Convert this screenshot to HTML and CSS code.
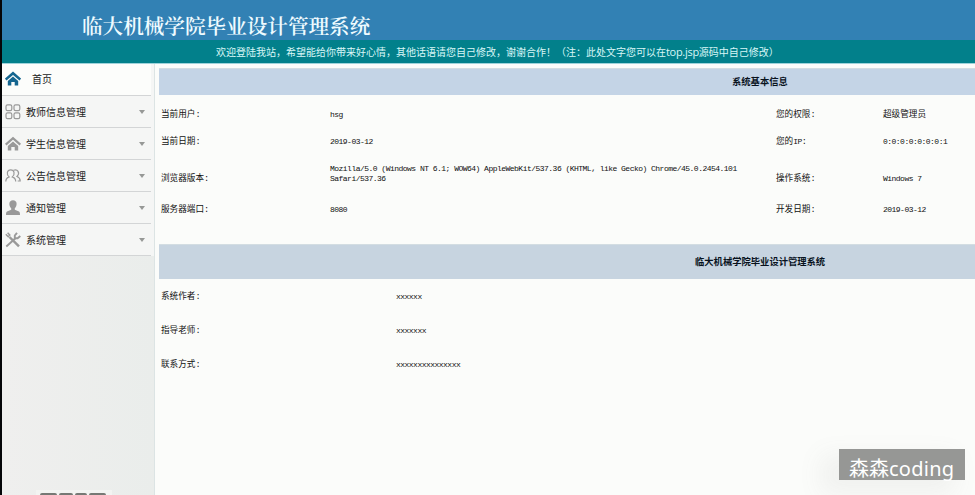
FILE: index.html
```
<!DOCTYPE html>
<html lang="zh-CN">
<head>
<meta charset="utf-8">
<title>临大机械学院毕业设计管理系统</title>
<link rel="stylesheet" href="styles.css">
</head>
<body>
<header class="header">
  <h1 class="title">临大机械学院毕业设计管理系统</h1>
  <div class="notice">欢迎登陆我站，希望能给你带来好心情，其他话语请您自己修改，谢谢合作！（注：此处文字您可以在<span class="latin">top.jsp</span>源码中自己修改）</div>
</header>
<div class="layout">
  <nav class="sidebar">
    <a class="item home"><svg class="icon" viewBox="0 0 16 16"><path d="M.7 8.600 8 2.200l7.300 6.400" fill="none" stroke="#14658f" stroke-width="2.500"/><path d="M2.800 9.900 8 5.400l5.200 4.500V14.500H9.700V11H6.300v3.500H2.800z" fill="#14658f"/></svg><span class="label">首页</span></a>
    <a class="item"><svg class="icon" viewBox="0 0 16 16"><g fill="none" stroke="#999" stroke-width="1.200"><rect x="1" y=".8" width="5.800" height="5.800" rx="1.600"/><rect x="9" y=".8" width="5.800" height="5.800" rx="1.600"/><rect x="1" y="8.800" width="5.800" height="5.800" rx="1.600"/><rect x="9" y="8.800" width="5.800" height="5.800" rx="1.600"/></g></svg><span class="label">教师信息管理</span><i class="arrow"></i></a>
    <a class="item"><svg class="icon" viewBox="0 0 16 16"><path d="M.7 8.600 8 2.200l7.300 6.400" fill="none" stroke="#999" stroke-width="2.300"/><path d="M2.800 9.900 8 5.400l5.200 4.500V14.500H9.700V11H6.300v3.500H2.800z" fill="#999"/></svg><span class="label">学生信息管理</span><i class="arrow"></i></a>
    <a class="item"><svg class="icon" viewBox="0 0 16 16"><g fill="none" stroke="#999" stroke-width="1.200"><path d="M.8 13.500c0-3 1-3.800 3.300-4.600C1.100 6 2 1.800 5.700 1.800s4.600 4.200 1.600 7.100c2.400.8 3.400 1.600 3.400 4.600"/><path d="M8.500 2.300C12.500.5 15.500 5 12 8.500c2.400.9 3.200 2 3.200 4.500h-2.500"/></g></svg><span class="label">公告信息管理</span><i class="arrow"></i></a>
    <a class="item"><svg class="icon" viewBox="0 0 16 16"><path d="M8 .3c4.500 0 4.500 5.500 1.800 8v1.500l4.200 1.600c.8.400 1 1.500 1 3.500H1c0-2 .2-3.100 1-3.500l4.200-1.600V8.300C3.500 5.800 3.500.3 8 .3z" fill="#999"/></svg><span class="label">通知管理</span><i class="arrow"></i></a>
    <a class="item"><svg class="icon" viewBox="0 0 16 16"><g fill="none" stroke="#999"><path d="M4.500 5 14 14.400" stroke-width="2.400"/><path d="M.8 2.300 3.200 4.700 4.800 3 2.600.8" stroke-width="1.500"/><path d="M1.300 14.500 10.500 6.300" stroke-width="1.900"/><path d="M12 .8 9.800 3.500v2.800h2.800L15.300 4" stroke-width="1.900"/></g></svg><span class="label">系统管理</span><i class="arrow"></i></a>
    <div class="fragment"><i class="f1"></i><i class="f2"></i><i class="f3"></i><i class="f4"></i></div>
  </nav>
  <main class="content">
    <h2 class="bar bar-info">系统基本信息</h2>
    <div class="info">
      <span>当前用户:</span><span class="val">hsg</span><span>您的权限:</span><span>超级管理员</span>
      <span>当前日期:</span><span class="val">2019-03-12</span><span>您的<span class="val">IP</span>:</span><span class="val">0:0:0:0:0:0:0:1</span>
      <span>浏览器版本:</span><span class="val agent">Mozilla/5.0 (Windows NT 6.1; WOW64) AppleWebKit/537.36 (KHTML, like Gecko) Chrome/45.0.2454.101<br>Safari/537.36</span><span>操作系统:</span><span class="val">Windows 7</span>
      <span>服务器端口:</span><span class="val">8080</span><span>开发日期:</span><span class="val">2019-03-12</span>
    </div>
    <h2 class="bar bar-about">临大机械学院毕业设计管理系统</h2>
    <div class="about">
      <span>系统作者:</span><span class="val">xxxxxx</span>
      <span>指导老师:</span><span class="val">xxxxxxx</span>
      <span>联系方式:</span><span class="val">xxxxxxxxxxxxxxx</span>
    </div>
  </main>
</div>
<div class="watermark">森森<span>coding</span></div>
</body>
</html>
```
FILE: styles.css
```
* { box-sizing: border-box; }
body {
  margin: 0;
  height: 495px;
  overflow: hidden;
  border-left: 2px solid #050608;
  background: #fbfcfa;
  color: #111;
  font-family: "Liberation Mono", "Noto Sans CJK SC", sans-serif;
  font-size: 8.6px;
}
.header { height: 64px; background: #3281b4; color: #fff; border-bottom: 1px solid #9fd3da; }
.title {
  margin: 0;
  height: 40px;
  padding: 10px 0 0 80px;
  font: 600 20.6px/30px "Noto Serif CJK SC", "Noto Sans CJK SC", serif;
  color: #effbff;
  white-space: nowrap;
}
.notice {
  height: 23px;
  padding-left: 214px;
  background: #02808b;
  color: #d9f7f7;
  font: 10px/24px "Noto Sans CJK SC", sans-serif;
  white-space: nowrap;
}
.notice .latin { font-family: "Open Sans", sans-serif; font-size: 11px; letter-spacing: -0.3px; }
.layout { display: flex; height: 431px; }
.sidebar {
  display: flex;
  flex-direction: column;
  width: 153px;
  flex: none;
  background: linear-gradient(90deg, #efefee, #eaedeb);
  border-right: 1px solid #dce4e4;
}
.item {
  display: flex;
  align-items: center;
  width: 149px;
  height: 32px;
  padding: 0 6px 0 3px;
  background: #f5f6f5;
  border-bottom: 1px solid #d3d5d6;
  font: 10px/16px "Noto Sans CJK SC", sans-serif;
  color: #222;
}
.item { box-shadow: 3px 0 #f5f6f5; }
.home { background: #fcfdfb; padding-bottom: 1px; }
.icon { width: 16px; height: 16px; flex: none; }
.label { flex: 1; margin-left: 5px; }
.home .label { margin-left: 11px; }
.arrow { border: 3.5px solid transparent; border-top: 4px solid #969896; border-bottom: 0; }
.fragment {
  display: flex;
  gap: 2px;
  width: 76px;
  height: 5px;
  margin: auto 0 0 34px;
  padding: 3px 4px 0;
  background: #f3f4f2;
}
.fragment i { height: 2px; background: #777975; border-radius: 5px 5px 0 0; }
.f1 { width: 17px; }
.f2 { width: 14px; }
.f3 { width: 12px; }
.f4 { width: 17px; }
.content { flex: 1; min-width: 0; padding: 4px 0 0 4px; }
.bar {
  margin: 0;
  display: flex;
  align-items: center;
  border-top: 1px solid #d3dde2;
  padding-bottom: 2px;
  color: #08121d;
  font: 700 9.3px/14px "Noto Sans CJK SC", sans-serif;
}
.bar-info { height: 27px; background: #c4d4e6; padding-left: 573px; padding-bottom: 3px; }
.bar-about { height: 35px; background: #c7d4e0; padding-left: 536px; }
.info, .about { display: grid; align-items: center; line-height: 10px; padding-left: 2px; white-space: nowrap; }
.info {
  height: 149px;
  padding-top: 6px;
  grid-template-columns: 169px 446px 107px 1fr;
  grid-template-rows: 28px 26px 48px 14px;
}
.about {
  padding-top: 1px;
  grid-template-columns: 235px 1fr;
  grid-auto-rows: 34px;
}
.val { font-family: "Liberation Mono", monospace; font-size: 8px; letter-spacing: -0.52px; }
.agent { position: relative; top: -5px; }
.watermark {
  position: absolute;
  left: 839px;
  top: 449px;
  width: 126px;
  height: 31px;
  padding-left: 10px;
  background: #969795;
  box-shadow: -14px 10px 24px 4px rgba(120, 120, 120, .08);
  color: #fff;
  font: 20px/38px "Noto Sans CJK SC", sans-serif;
  white-space: nowrap;
}
.watermark span { font-family: "Noto Sans", sans-serif; letter-spacing: .25px; }
```
